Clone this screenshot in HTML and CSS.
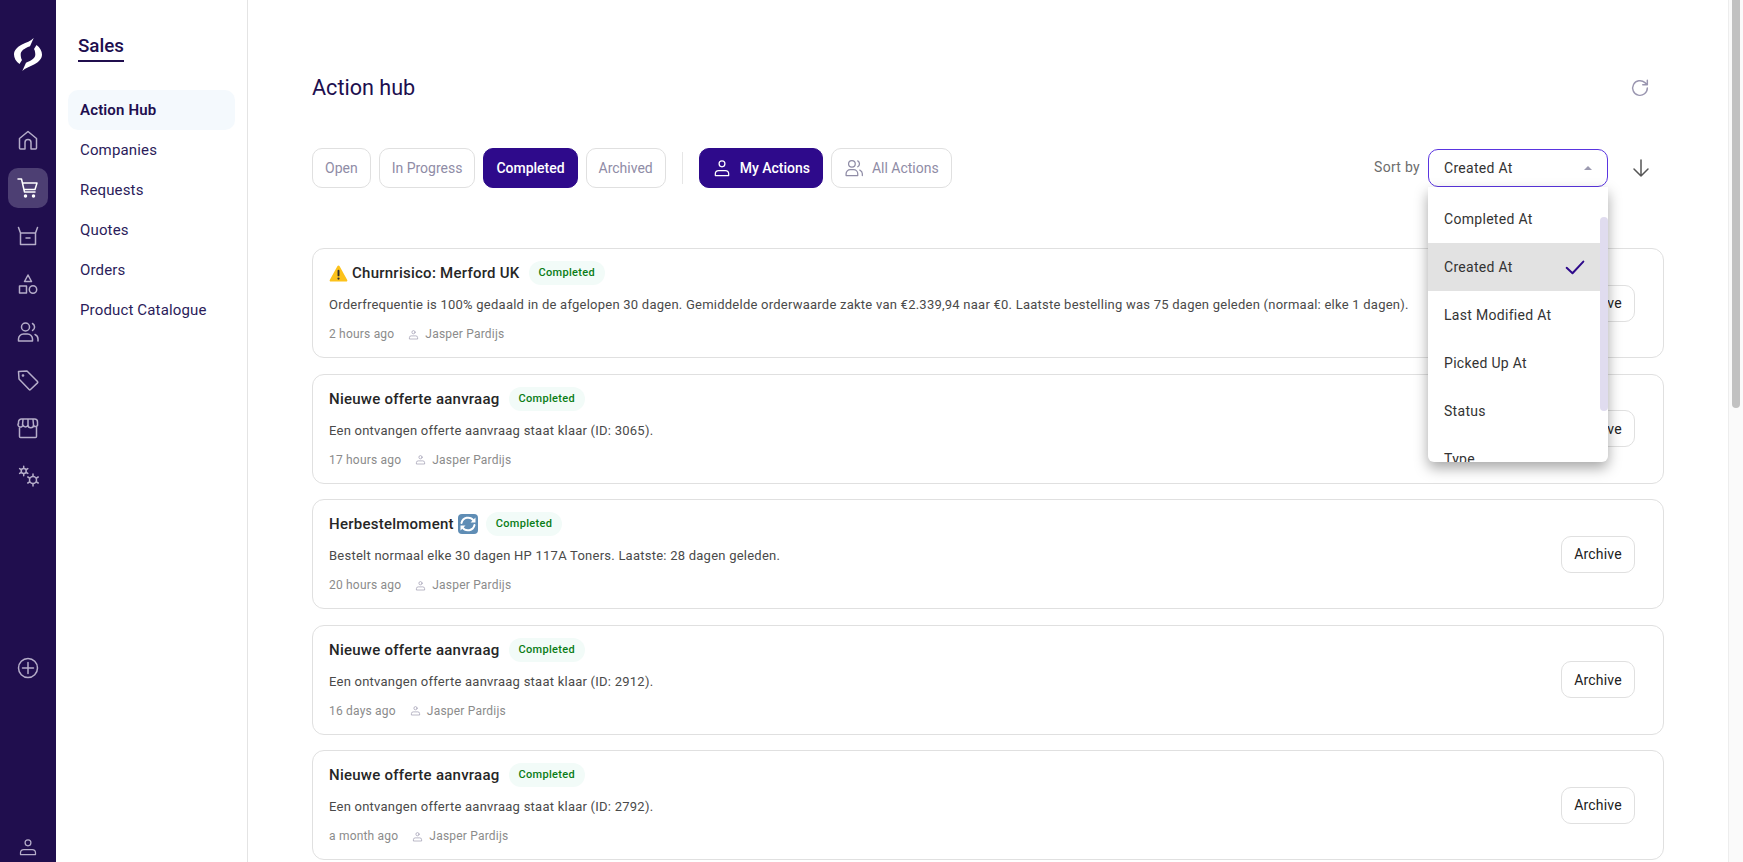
FILE: index.html
```html
<!DOCTYPE html>
<html lang="en">
<head>
<meta charset="utf-8">
<title>Action hub</title>
<link rel="stylesheet" href="styles.css">
</head>
<body>
<div class="app">
  <nav class="rail">
    <svg class="logo" viewBox="0 0 28 33" width="28" height="33"><path d="M19.700 0C17 3 12 4.500 8 6.500 3 9 0 12.500 0 16.500 0 20 2 23.500 5.500 26L8 22C7 20.500 6.700 18 6.700 16.500 6.700 13 10 10.500 16 8.300Z"/><path transform="rotate(180 14 16.500)" d="M19.700 0C17 3 12 4.500 8 6.500 3 9 0 12.500 0 16.500 0 20 2 23.500 5.500 26L8 22C7 20.500 6.700 18 6.700 16.500 6.700 13 10 10.500 16 8.300Z"/></svg>
    <div class="rail-top">
      <a class="rail-item"><svg viewBox="0 0 24 24"><path d="M3.500 10.500 12 3.500l8.500 7V20a1 1 0 0 1-1 1H15v-6.500a3 3 0 0 0-6 0V21H4.500a1 1 0 0 1-1-1z"/></svg></a>
      <a class="rail-item active"><svg viewBox="0 0 24 24"><path d="M2 3h3.500l3 13h10.500M6.500 7H21l-2 6.500H8"/><circle cx="9.500" cy="20" r="1" class="dot"/><circle cx="17.500" cy="20" r="1" class="dot"/></svg></a>
      <a class="rail-item"><svg viewBox="0 0 24 24"><path d="M4.500 9h15v11.500h-15zM2.500 3.500 4.500 9M21.500 3.500 19.500 9M10 14h4"/></svg></a>
      <a class="rail-item"><svg viewBox="0 0 24 24"><path d="M12 3 15.500 9.500h-7zM3.500 14h7v7h-7z"/><circle cx="17" cy="17.500" r="3.700"/></svg></a>
      <a class="rail-item"><svg viewBox="0 0 24 24"><circle cx="9.500" cy="7" r="4"/><path d="M2.500 21v-2a5 5 0 0 1 5-5h4a5 5 0 0 1 5 5v2zM16.500 3.500a4 4 0 0 1 0 7M19 14.500a5 5 0 0 1 3 4.500v2"/></svg></a>
      <a class="rail-item"><svg viewBox="0 0 24 24"><path d="M2.500 3.500 11 3l10.500 10.500a1 1 0 0 1 0 1.400l-7 6.600a1 1 0 0 1-1.400 0L3 11z"/><circle cx="7" cy="7.500" r=".6"/></svg></a>
      <a class="rail-item"><svg viewBox="0 0 24 24"><path d="M3.500 11v9.500a1 1 0 0 0 1 1h15a1 1 0 0 0 1-1V11M2.500 8V6a3 3 0 0 1 3-3h13a3 3 0 0 1 3 3v2a2 2 0 0 1-4 1 2.600 2.600 0 0 1-5.500 0 2.600 2.600 0 0 1-5 0 2 2 0 0 1-5-1zM7 3.500 6.500 9M12 3.500V9M17 3.500l.5 5.500"/></svg></a>
      <a class="rail-item"><svg viewBox="0 0 24 24"><circle cx="7.700" cy="7" r="2.500"/><circle cx="17" cy="16" r="3.500"/><path class="gear" d="M7.700 4V2.300M7.700 10v1.700M10.300 5.500l1.500-.85M10.300 8.500l1.500.85M5.100 5.500l-1.500-.85M5.100 8.500l-1.500.85M17 12v-2M17 20v2M20.500 14l1.700-1M20.500 18l1.700 1M13.500 14l-1.700-1M13.500 18l-1.700 1"/></svg></a>
    </div>
    <a class="rail-item rail-add"><svg viewBox="0 0 24 24"><circle cx="12" cy="12" r="9.500"/><path d="M12 6.500v11M6.500 12h11"/></svg></a>
    <a class="rail-item rail-user"><svg viewBox="0 0 24 24"><circle cx="12" cy="7" r="3.500"/><path d="M3 21v-2a4 4 0 0 1 4-4h10a4 4 0 0 1 4 4v2z"/></svg></a>
  </nav>

  <aside class="subnav">
    <h2 class="subnav-title">Sales</h2>
    <ul class="subnav-list">
      <li class="subnav-item current">Action Hub</li>
      <li class="subnav-item">Companies</li>
      <li class="subnav-item">Requests</li>
      <li class="subnav-item">Quotes</li>
      <li class="subnav-item">Orders</li>
      <li class="subnav-item">Product Catalogue</li>
    </ul>
  </aside>

  <main class="main">
    <header class="page-head">
      <h1 class="page-title">Action hub</h1>
      <svg class="refresh" viewBox="0 0 24 24"><path d="M20 12a8 8 0 1 1-2.600-5.900L20 8.500M20 3.500v5h-5"/></svg>
    </header>

    <div class="toolbar">
      <button class="chip">Open</button>
      <button class="chip">In Progress</button>
      <button class="chip on">Completed</button>
      <button class="chip">Archived</button>
      <span class="divider"></span>
      <button class="chip on wide"><svg viewBox="0 0 24 24"><circle cx="12" cy="7" r="3.500"/><path d="M4 21v-2a4 4 0 0 1 4-4h8a4 4 0 0 1 4 4v2z"/></svg>My Actions</button>
      <button class="chip wide"><svg viewBox="0 0 24 24"><circle cx="9.500" cy="7" r="4"/><path d="M2.500 21v-2a5 5 0 0 1 5-5h4a5 5 0 0 1 5 5v2zM16.500 3.500a4 4 0 0 1 0 7M19 14.500a5 5 0 0 1 3 4.500v2"/></svg>All Actions</button>
      <div class="sort">
        <span class="sort-label">Sort by</span>
        <div class="select">
          <span>Created At</span>
          <span class="caret"></span>
          <div class="menu">
            <div class="menu-item">Completed At</div>
            <div class="menu-item selected">Created At<svg viewBox="0 0 24 24"><path d="M2 13 9 19.500 22 5.500"/></svg></div>
            <div class="menu-item">Last Modified At</div>
            <div class="menu-item">Picked Up At</div>
            <div class="menu-item">Status</div>
            <div class="menu-item">Type</div>
            <span class="menu-thumb"></span>
          </div>
        </div>
        <svg class="sort-dir" viewBox="0 0 24 24"><path d="M12 4v16M5 13l7 7 7-7"/></svg>
      </div>
    </div>

    <section class="cards">
      <article class="card">
        <div class="card-body">
          <div class="card-head"><svg class="emoji" viewBox="0 0 20 20"><path fill="#fcc21b" d="M10 1.500c.5 0 .9.300 1.200.800l8 14.500c.4.800-.1 1.700-1 1.700H1.800c-.9 0-1.400-.9-1-1.700l8-14.500c.3-.5.700-.8 1.200-.8z"/><rect x="9" y="6" width="2" height="7" rx="1" fill="#2f2f2f"/><circle cx="10" cy="15.300" r="1.200" fill="#2f2f2f"/></svg><h3>Churnrisico: Merford UK</h3><span class="badge">Completed</span></div>
          <p class="card-text">Orderfrequentie is 100% gedaald in de afgelopen 30 dagen. Gemiddelde orderwaarde zakte van €2.339,94 naar €0. Laatste bestelling was 75 dagen geleden (normaal: elke 1 dagen).</p>
          <div class="card-meta"><span>2 hours ago</span><span class="owner"><svg viewBox="0 0 24 24"><circle cx="12" cy="7" r="3.500"/><path d="M3 21v-2a4 4 0 0 1 4-4h10a4 4 0 0 1 4 4v2z"/></svg>Jasper Pardijs</span></div>
        </div>
        <button class="archive">Archive</button>
      </article>
      <article class="card">
        <div class="card-body">
          <div class="card-head"><h3>Nieuwe offerte aanvraag</h3><span class="badge">Completed</span></div>
          <p class="card-text">Een ontvangen offerte aanvraag staat klaar (ID: 3065).</p>
          <div class="card-meta"><span>17 hours ago</span><span class="owner"><svg viewBox="0 0 24 24"><circle cx="12" cy="7" r="3.500"/><path d="M3 21v-2a4 4 0 0 1 4-4h10a4 4 0 0 1 4 4v2z"/></svg>Jasper Pardijs</span></div>
        </div>
        <button class="archive">Archive</button>
      </article>
      <article class="card">
        <div class="card-body">
          <div class="card-head"><h3>Herbestelmoment</h3><svg class="emoji trail" viewBox="0 0 20 20"><rect width="20" height="20" rx="4" fill="#5f8db5"/><path class="swirl" d="M3.500 9a6.700 6.700 0 0 1 12-2.500M16.500 11a6.700 6.700 0 0 1-12 2.500"/><path fill="#fff" d="M17.500 3.500v5h-5zM2.500 16.500v-5h5z"/></svg><span class="badge">Completed</span></div>
          <p class="card-text">Bestelt normaal elke 30 dagen HP 117A Toners. Laatste: 28 dagen geleden.</p>
          <div class="card-meta"><span>20 hours ago</span><span class="owner"><svg viewBox="0 0 24 24"><circle cx="12" cy="7" r="3.500"/><path d="M3 21v-2a4 4 0 0 1 4-4h10a4 4 0 0 1 4 4v2z"/></svg>Jasper Pardijs</span></div>
        </div>
        <button class="archive">Archive</button>
      </article>
      <article class="card">
        <div class="card-body">
          <div class="card-head"><h3>Nieuwe offerte aanvraag</h3><span class="badge">Completed</span></div>
          <p class="card-text">Een ontvangen offerte aanvraag staat klaar (ID: 2912).</p>
          <div class="card-meta"><span>16 days ago</span><span class="owner"><svg viewBox="0 0 24 24"><circle cx="12" cy="7" r="3.500"/><path d="M3 21v-2a4 4 0 0 1 4-4h10a4 4 0 0 1 4 4v2z"/></svg>Jasper Pardijs</span></div>
        </div>
        <button class="archive">Archive</button>
      </article>
      <article class="card">
        <div class="card-body">
          <div class="card-head"><h3>Nieuwe offerte aanvraag</h3><span class="badge">Completed</span></div>
          <p class="card-text">Een ontvangen offerte aanvraag staat klaar (ID: 2792).</p>
          <div class="card-meta"><span>a month ago</span><span class="owner"><svg viewBox="0 0 24 24"><circle cx="12" cy="7" r="3.500"/><path d="M3 21v-2a4 4 0 0 1 4-4h10a4 4 0 0 1 4 4v2z"/></svg>Jasper Pardijs</span></div>
        </div>
        <button class="archive">Archive</button>
      </article>
    </section>
  </main>

  <div class="page-scroll"><span class="page-thumb"></span></div>
</div>
</body>
</html>
```

FILE: styles.css
```css
* { box-sizing: border-box; }
html, body { margin: 0; height: 100%; overflow: hidden; background: #fff; }
body { font-family: Roboto, "Liberation Sans", sans-serif; color: #212121; }
button { font-family: inherit; cursor: pointer; }
svg { fill: none; stroke: currentColor; stroke-width: 1.500; stroke-linejoin: round; stroke-linecap: round; }
h1, h2, h3, p, ul { margin: 0; padding: 0; }

.app { display: flex; height: 862px; width: 1743px; overflow: hidden; }

.rail { width: 56px; flex: none; background: #200e4e; display: flex; flex-direction: column; align-items: center; padding-top: 38px; color: #b5adc9; }
.logo { stroke: none; fill: #fff; flex: none; }
.rail-top { display: flex; flex-direction: column; gap: 8px; margin-top: 49px; }
.rail-item { width: 40px; height: 40px; border-radius: 10px; display: flex; align-items: center; justify-content: center; flex: none; }
.rail-item svg { width: 24px; height: 24px; }
.rail-item.active { background: #4d3f73; color: #fff; }
.rail-item .dot { fill: currentColor; }
.rail-add { margin-top: 152px; }
.rail-user { margin-top: auto; height: 30px; }
.rail-user svg { width: 20px; height: 20px; }

.subnav { width: 192px; flex: none; border-right: 1px solid #e4e4e4; padding: 34px 12px 0; }
.subnav-title { display: inline-block; font-size: 18.800px; line-height: 24px; font-weight: 500; color: #200e4e; margin-left: 10px; padding-bottom: 2px; border-bottom: 2px solid #200e4e; }
.subnav-list { list-style: none; margin-top: 28px; }
.subnav-item { height: 40px; line-height: 40px; padding: 0 12px; font-size: 15px; color: #2b1c5a; border-radius: 10px; letter-spacing: .15px; width: 167px; }
.subnav-item.current { background: #f4f9fd; font-weight: 600; color: #200e4e; }

.main { flex: 1; min-width: 0; padding: 0 79px 0 64px; position: relative; }
.page-head { display: flex; align-items: center; justify-content: space-between; height: 40px; margin-top: 67px; padding-right: 13px; }
.page-title { font-size: 21.600px; font-weight: 400; line-height: 40px; color: #200e4e; margin-top: 1px; }
.refresh { width: 22px; height: 22px; color: #9a96b0; stroke-width: 1.600; margin-top: 2px; }

.toolbar { display: flex; align-items: center; gap: 8px; margin-top: 41px; height: 40px; }
.chip { height: 40px; padding: 0 12px; border: 1px solid #e0e0e0; border-radius: 10px; background: #fff; color: #8f8ca6; font-size: 14px; display: flex; align-items: center; gap: 8px; }
.chip.on { background: #2e0a8b; border-color: #2e0a8b; color: #fff; font-weight: 500; letter-spacing: -.02px; }
.chip.wide { padding-right: 12px; }
.chip svg { width: 20px; height: 20px; }
.divider { width: 1px; height: 32px; background: #e6e6e6; margin: 0 8px; }

.sort { margin-left: auto; display: flex; align-items: center; margin-right: 11px; }
.sort-label { font-size: 14px; color: #6d6d6d; letter-spacing: .3px; margin-right: 8px; margin-top: -2px; }
.select { position: relative; width: 180px; height: 38px; border: 1px solid #5a35e0; border-radius: 10px; display: flex; align-items: center; justify-content: space-between; padding: 0 15px; font-size: 14px; letter-spacing: .3px; color: #333; margin-top: -1px; }
.caret { width: 0; height: 0; border-left: 4px solid transparent; border-right: 4px solid transparent; border-bottom: 4px solid #9c9ab0; margin-right: 0; }
.menu { position: absolute; left: -1px; top: 37px; width: 180px; height: 275px; background: #fff; border-radius: 0 0 6px 6px; box-shadow: 0 6px 14px rgba(0,0,0,.35); padding-top: 8px; overflow: hidden; z-index: 5; }
.menu-item { height: 48px; display: flex; align-items: center; justify-content: space-between; padding: 0 15px 0 16px; width: 172px; font-size: 14px; color: #333; }
.menu-item.selected { background: #e2e2e2; }
.menu-item svg { width: 20px; height: 20px; color: #2e0a8b; stroke-width: 2.400; }
.menu-thumb { position: absolute; right: 0; top: 30px; width: 8px; height: 194px; background: #e0dcef; border-radius: 4px; }
.sort-dir { width: 24px; height: 24px; color: #555; margin-left: 21px; stroke-width: 1.500; }

.cards { display: flex; flex-direction: column; gap: 15.600px; margin-top: 60px; }
.card { height: 110px; flex: none; border: 1px solid #e0e0e0; border-radius: 12px; padding: 0 28px 0 16px; display: flex; align-items: center; justify-content: space-between; background: #fff; }
.card-body { min-width: 0; margin-top: -3px; }
.card-head { display: flex; align-items: center; height: 24px; }
.card-head h3 { font-size: 15px; font-weight: 500; color: #262626; letter-spacing: .25px; }
.emoji { width: 19px; height: 19px; stroke: none; margin-right: 4px; flex: none; }
.emoji.trail { width: 20px; height: 20px; margin: 0 -1px 0 4px; }
.swirl { fill: none; stroke: #fff; stroke-width: 2; }
.badge { margin-left: 9px; height: 24px; line-height: 24px; padding: 0 10px; border-radius: 12px; background: #f2fbf8; color: #0a7d16; font-size: 11px; font-weight: 500; letter-spacing: .3px; }
.card-text { font-size: 13px; color: #4a4a4a; margin-top: 11px; line-height: 18px; letter-spacing: .24px; white-space: nowrap; }
.card-meta { display: flex; align-items: center; gap: 14px; font-size: 12px; color: #8b8b8b; margin-top: 12px; line-height: 16px; letter-spacing: .2px; }
.owner { display: flex; align-items: center; gap: 6px; }
.owner svg { width: 11px; height: 11px; color: #9b98ae; }
.archive { width: 74px; height: 37px; flex: none; border: 1px solid #e0e0e0; border-radius: 10px; background: #fff; color: #212121; font-size: 14px; letter-spacing: .2px; padding: 0; }

.page-scroll { position: fixed; right: 0; top: 0; width: 15px; height: 862px; background: #fafafa; border-left: 1px solid #ededed; z-index: 4; }
.page-thumb { position: absolute; left: 3px; top: 0; width: 8px; height: 408px; border-radius: 0 0 4px 4px; background: #c1c1c1; }
```
